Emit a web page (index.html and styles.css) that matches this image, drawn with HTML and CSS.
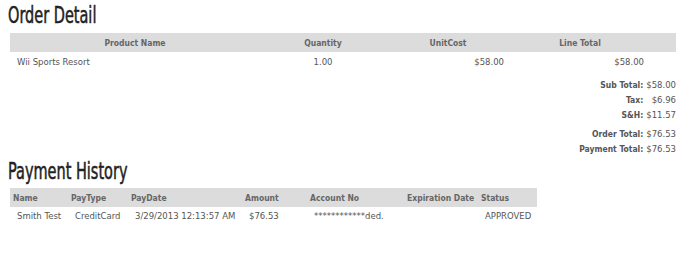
FILE: index.html
```html
<!DOCTYPE html>
<html>
<head>
<meta charset="utf-8">
<link rel="stylesheet" href="styles.css">
</head>
<body>
<h1 class="title">Order Detail</h1>
<table class="grid order">
  <colgroup>
    <col class="c-prod"><col class="c-qty"><col class="c-cost"><col class="c-line"><col class="c-pad">
  </colgroup>
  <thead>
    <tr><th>Product Name</th><th>Quantity</th><th>UnitCost</th><th>Line Total</th><th></th></tr>
  </thead>
  <tbody>
    <tr><td class="left">Wii Sports Resort</td><td class="center">1.00</td><td class="right">$58.00</td><td class="right">$58.00</td><td></td></tr>
  </tbody>
</table>

<div class="totals">
  <table class="sums">
    <tr><th>Sub Total:</th><td>$58.00</td></tr>
    <tr><th>Tax:</th><td>$6.96</td></tr>
    <tr><th>S&amp;H:</th><td>$11.57</td></tr>
  </table>
  <table class="sums grand">
    <tr><th>Order Total:</th><td>$76.53</td></tr>
    <tr><th>Payment Total:</th><td>$76.53</td></tr>
  </table>
</div>

<h1 class="title title-pay">Payment History</h1>
<table class="grid pay">
  <colgroup>
    <col class="p-name"><col class="p-type"><col class="p-date"><col class="p-amt"><col class="p-acct"><col class="p-exp"><col class="p-stat">
  </colgroup>
  <thead>
    <tr><th>Name</th><th>PayType</th><th>PayDate</th><th>Amount</th><th>Account No</th><th>Expiration Date</th><th>Status</th></tr>
  </thead>
  <tbody>
    <tr><td>Smith Test</td><td>CreditCard</td><td>3/29/2013 12:13:57 AM</td><td>$76.53</td><td>************ded.</td><td></td><td>APPROVED</td></tr>
  </tbody>
</table>
</body>
</html>
```

FILE: styles.css
```css
html, body {
  margin: 0;
  background: #fff;
}

body {
  padding: 0 8px;
  font-family: "DejaVu Sans", Verdana, sans-serif;
  font-size: 8.5px;
  color: #555;
}

.title {
  margin: 0;
  padding-top: 3px;
  height: 30px;
  font-family: "DejaVu Sans Condensed", sans-serif;
  font-weight: normal;
  font-size: 23px;
  line-height: 24px;
  color: #222;
  -webkit-text-stroke: 0.5px #222;
  transform: scaleX(0.7);
  transform-origin: left center;
}

.title-pay {
  height: 27px;
}

.grid {
  border-collapse: collapse;
  table-layout: fixed;
  margin-left: 2px;
}

.grid th {
  background: #dcdcdc;
  color: #666;
  font-family: "DejaVu Sans Condensed", "DejaVu Sans", sans-serif;
  font-weight: bold;
  height: 19px;
  padding: 0 3px;
  white-space: nowrap;
}

.grid td {
  height: 20px;
  padding: 0 4px;
  white-space: nowrap;
}

/* order lines */
.order { width: 666px; }
.order th { text-align: center; }
.c-prod { width: 250px; }
.c-qty { width: 126px; }
.c-cost { width: 124px; }
.c-line { width: 140px; }
.c-pad { width: 26px; }
.order td.left { padding-left: 7px; text-align: left; }
.order td.center { text-align: center; }
.order td.right { text-align: right; padding-right: 6px; }

/* totals block */
.totals {
  display: flex;
  flex-direction: column;
  align-items: flex-end;
  padding: 5px 3px 0 0;
}

.sums {
  border-collapse: collapse;
}

.sums th {
  text-align: right;
  font-family: "DejaVu Sans Condensed", "DejaVu Sans", sans-serif;
  font-weight: bold;
  color: #555;
  padding: 0 3px 0 0;
  height: 15px;
  white-space: nowrap;
}

.sums td {
  text-align: right;
  padding: 0;
  height: 15px;
  white-space: nowrap;
}

.grand {
  margin-top: 4px;
}

/* payment rows */
.pay { width: 527px; margin-top: 2px; }
.pay th { text-align: left; }
.pay td { padding-left: 7px; height: 18px; }
.p-name { width: 58px; }
.p-type { width: 60px; }
.p-date { width: 114px; }
.p-amt { width: 65px; }
.p-acct { width: 97px; }
.p-exp { width: 74px; }
.p-stat { width: 59px; }
```
